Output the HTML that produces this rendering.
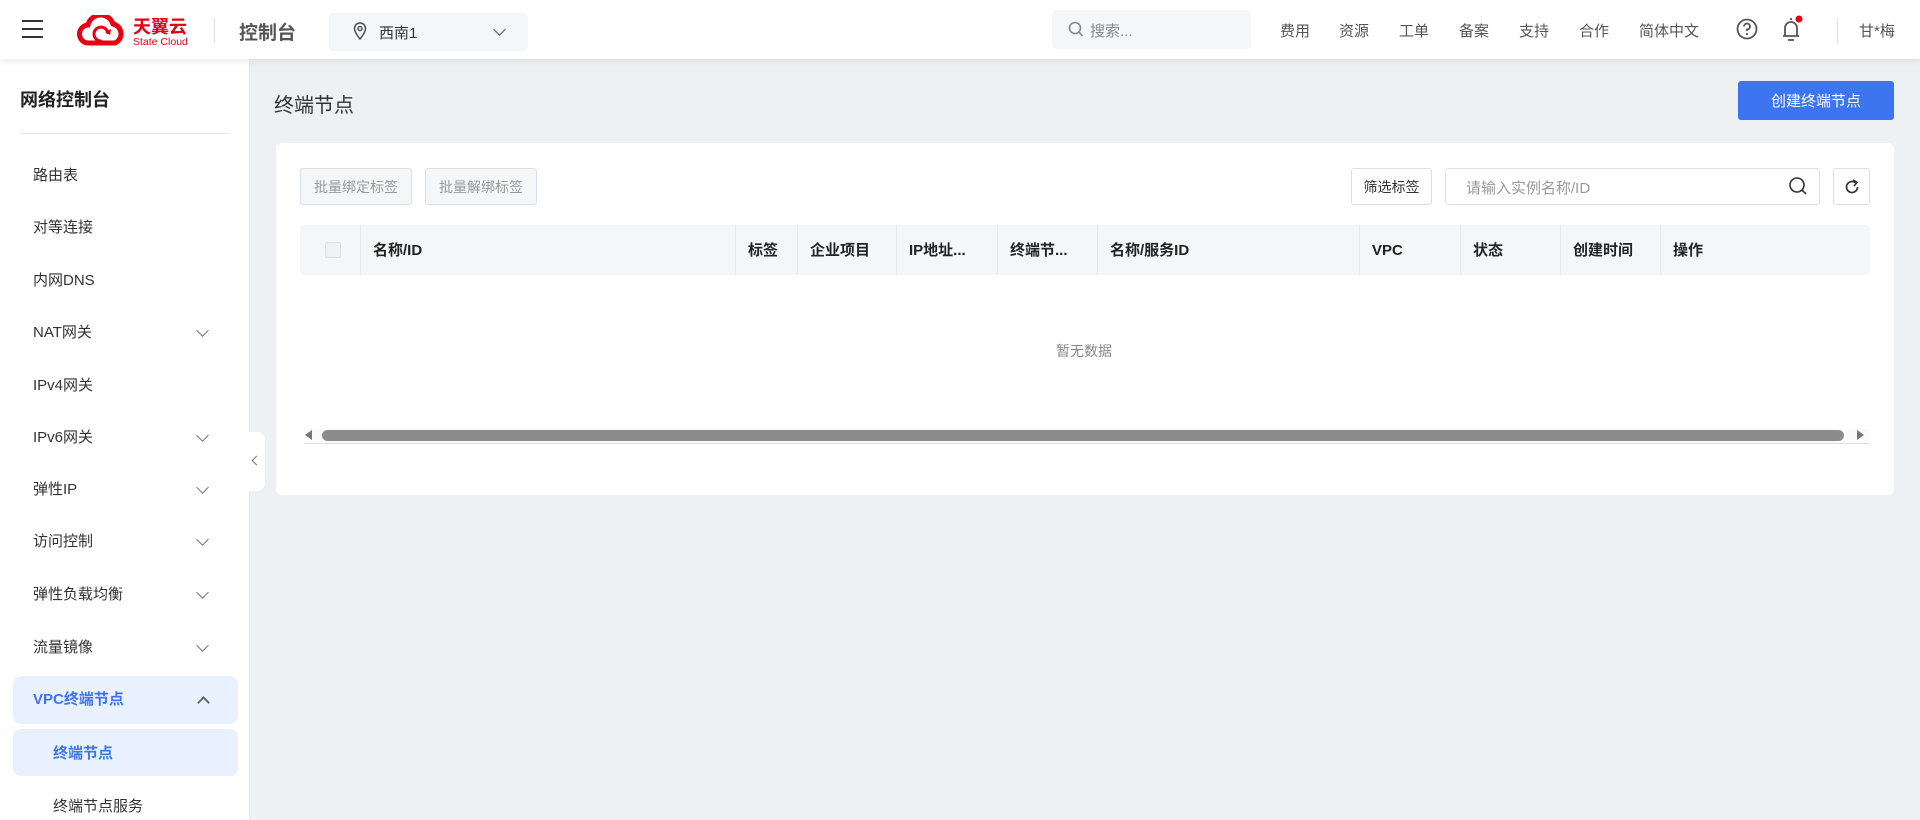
<!DOCTYPE html>
<html><head><meta charset="utf-8"><style>
*{box-sizing:border-box;margin:0;padding:0}
body{width:1920px;height:820px;overflow:hidden;background:#eef0f4;font-family:"Liberation Sans","Noto Sans CJK SC",sans-serif;color:#333;position:relative}
.a{position:absolute;white-space:nowrap}
.hdr{left:0;top:0;width:1920px;height:59px;background:#fff;box-shadow:0 2px 8px rgba(0,0,0,.08);z-index:5}
.nav{font-size:15px;color:#555;top:20px}
.side{left:0;top:59px;width:250px;height:761px;background:#fff;border-right:1px solid #e4e6eb}
.mi{left:33px;font-size:15px;color:#333;line-height:22px}
.chev{left:198px;width:9px;height:9px;border-right:1.5px solid #777;border-bottom:1.5px solid #777;transform:rotate(45deg)}
.btn{border:1px solid #dcdfe6;border-radius:3px;font-size:14px;display:flex;align-items:center;justify-content:center;background:#f5f6f8;color:#999}
.th{top:240px;font-size:15px;font-weight:bold;color:#222;line-height:22px}
.cd{top:225px;width:1px;height:49px;background:#e6e8ec}
</style></head><body>
<div class="a hdr">
  <div class="a" style="left:22px;top:20px;width:21px;height:2px;background:#333"></div>
  <div class="a" style="left:22px;top:28px;width:21px;height:2px;background:#333"></div>
  <div class="a" style="left:22px;top:36px;width:21px;height:2px;background:#333"></div>
  <svg class="a" style="left:77px;top:15px" width="50" height="32" viewBox="0 0 50 32"><path d="M12 28 A9 9 0 0 1 11 10 A13 13 0 0 1 36 9 A10 10 0 0 1 38 28 Z" fill="none" stroke="#e60012" stroke-width="5"/><path d="M25 26 A7 7 0 1 1 31 19" fill="none" stroke="#e60012" stroke-width="3"/><path d="M28 17 L33 20 L34 14Z" fill="#e60012"/></svg>
  <div class="a" style="left:133px;top:13px;font-size:18px;font-weight:bold;color:#e60012">天翼云</div>
  <div class="a" style="left:133px;top:36px;font-size:10.5px;color:#e60012">State Cloud</div>
  <div class="a" style="left:214px;top:18px;width:1px;height:25px;background:#e0e0e0"></div>
  <div class="a" style="left:239px;top:18px;font-size:19px;font-weight:bold;color:#555">控制台</div>
  <div class="a" style="left:329px;top:13px;width:199px;height:38px;background:#f5f6f8;border-radius:4px"></div>
  <svg class="a" style="left:353px;top:22px" width="14" height="18" viewBox="0 0 14 18"><path d="M7 17 C3 12 1.5 9 1.5 6.5 A5.5 5.5 0 0 1 12.5 6.5 C12.5 9 11 12 7 17Z" fill="none" stroke="#555" stroke-width="1.6"/><circle cx="7" cy="6.5" r="2" fill="none" stroke="#555" stroke-width="1.5"/></svg>
  <div class="a" style="left:379px;top:22px;font-size:15px;color:#333">西南1</div>
  <div class="a" style="left:495px;top:25px;width:9px;height:9px;border-right:1.6px solid #555;border-bottom:1.6px solid #555;transform:rotate(45deg)"></div>
  <div class="a" style="left:1052px;top:10px;width:199px;height:39px;background:#f5f6f8;border-radius:4px"></div>
  <svg class="a" style="left:1068px;top:21px" width="16" height="18" viewBox="0 0 16 18"><circle cx="7" cy="7" r="5.5" fill="none" stroke="#888" stroke-width="1.6"/><path d="M11 11 L14.5 15" stroke="#888" stroke-width="1.6"/></svg>
  <div class="a" style="left:1090px;top:20px;font-size:15px;color:#888">搜索...</div>
  <div class="a nav" style="left:1280px">费用</div>
  <div class="a nav" style="left:1339px">资源</div>
  <div class="a nav" style="left:1399px">工单</div>
  <div class="a nav" style="left:1459px">备案</div>
  <div class="a nav" style="left:1519px">支持</div>
  <div class="a nav" style="left:1579px">合作</div>
  <div class="a nav" style="left:1639px">简体中文</div>
  <svg class="a" style="left:1736px;top:18px" width="22" height="22" viewBox="0 0 22 22"><circle cx="11" cy="11" r="9.5" fill="none" stroke="#555" stroke-width="1.8"/><path d="M8 8.5 A3 3 0 1 1 11 11.5 V13" fill="none" stroke="#555" stroke-width="1.8"/><circle cx="11" cy="16" r="1.1" fill="#555"/></svg>
  <svg class="a" style="left:1780px;top:15px" width="24" height="28" viewBox="0 0 24 28"><path d="M11 3 V5 M5 21 V13 A6 6 0 0 1 17 13 V21 Z M3 21 H19 M8 25 H14" fill="none" stroke="#555" stroke-width="1.8"/><circle cx="19" cy="4" r="3.5" fill="#e60012"/></svg>
  <div class="a" style="left:1837px;top:18px;width:1px;height:25px;background:#e0e0e0"></div>
  <div class="a nav" style="left:1859px">甘*梅</div>
</div>
<div class="a side">
  <div class="a" style="left:20px;top:27px;font-size:18px;font-weight:bold;color:#222">网络控制台</div>
  <div class="a" style="left:20px;top:74px;width:210px;height:1px;background:#e4e6eb"></div>
</div>
<div class="a mi" style="top:165px">路由表</div>
<div class="a mi" style="top:217px">对等连接</div>
<div class="a mi" style="top:270px">内网DNS</div>
<div class="a mi" style="top:322px">NAT网关</div><div class="a chev" style="top:326px"></div>
<div class="a mi" style="top:375px">IPv4网关</div>
<div class="a mi" style="top:427px">IPv6网关</div><div class="a chev" style="top:431px"></div>
<div class="a mi" style="top:479px">弹性IP</div><div class="a chev" style="top:483px"></div>
<div class="a mi" style="top:531px">访问控制</div><div class="a chev" style="top:535px"></div>
<div class="a mi" style="top:584px">弹性负载均衡</div><div class="a chev" style="top:588px"></div>
<div class="a mi" style="top:637px">流量镜像</div><div class="a chev" style="top:641px"></div>
<div class="a" style="left:13px;top:676px;width:225px;height:48px;background:#e8f1fd;border-radius:8px"></div>
<div class="a mi" style="top:689px;color:#3d74f0;font-weight:bold">VPC终端节点</div>
<div class="a" style="left:199px;top:698px;width:9px;height:9px;border-left:2px solid #666;border-top:2px solid #666;transform:rotate(45deg)"></div>
<div class="a" style="left:13px;top:729px;width:225px;height:47px;background:#e8f1fd;border-radius:8px"></div>
<div class="a" style="left:53px;top:742px;font-size:15px;color:#3d74f0;font-weight:bold">终端节点</div>
<div class="a" style="left:53px;top:795px;font-size:15px;color:#333">终端节点服务</div>
<div class="a" style="left:249px;top:432px;width:16px;height:59px;background:#fff;border-radius:0 8px 8px 0"></div>
<div class="a" style="left:253px;top:457px;width:7px;height:7px;border-left:1.5px solid #777;border-bottom:1.5px solid #777;transform:rotate(45deg)"></div>

<div class="a" style="left:274px;top:89px;font-size:20px;color:#333">终端节点</div>
<div class="a" style="left:1738px;top:81px;width:156px;height:39px;background:#3d74f0;border-radius:3px;color:#fff;font-size:15px;display:flex;align-items:center;justify-content:center">创建终端节点</div>
<div class="a" style="left:276px;top:143px;width:1618px;height:352px;background:#fff;border-radius:6px"></div>
<div class="a btn" style="left:300px;top:168px;width:112px;height:37px">批量绑定标签</div>
<div class="a btn" style="left:425px;top:168px;width:112px;height:37px">批量解绑标签</div>
<div class="a btn" style="left:1351px;top:168px;width:81px;height:37px;background:#fff;color:#333">筛选标签</div>
<div class="a" style="left:1445px;top:168px;width:375px;height:37px;border:1px solid #dcdfe6;border-radius:3px"></div>
<div class="a" style="left:1466px;top:177px;font-size:15px;color:#999">请输入实例名称/ID</div>
<svg class="a" style="left:1788px;top:176px" width="20" height="22" viewBox="0 0 20 22"><circle cx="9" cy="9" r="7" fill="none" stroke="#333" stroke-width="1.6"/><path d="M14 14 L18 18" stroke="#333" stroke-width="1.6"/></svg>
<div class="a" style="left:1833px;top:168px;width:37px;height:37px;border:1px solid #dcdfe6;border-radius:3px"></div>
<svg class="a" style="left:1843px;top:178px" width="18" height="18" viewBox="0 0 18 18"><path d="M14.5 9 A5.5 5.5 0 1 1 12.5 4.8" fill="none" stroke="#333" stroke-width="1.7"/><path d="M10 2 L14 4.5 L11 8" fill="none" stroke="#333" stroke-width="1.7"/></svg>
<div class="a" style="left:300px;top:225px;width:1570px;height:50px;background:#f5f6f8;border-radius:4px"></div>
<div class="a" style="left:325px;top:242px;width:16px;height:16px;border:1px solid #dcdfe6;border-radius:2px;background:#f0f1f3"></div>
<div class="a cd" style="left:360px"></div><div class="a cd" style="left:735px"></div><div class="a cd" style="left:797px"></div><div class="a cd" style="left:896px"></div><div class="a cd" style="left:997px"></div><div class="a cd" style="left:1097px"></div><div class="a cd" style="left:1359px"></div><div class="a cd" style="left:1460px"></div><div class="a cd" style="left:1560px"></div><div class="a cd" style="left:1660px"></div>
<div class="a th" style="left:373px">名称/ID</div>
<div class="a th" style="left:748px">标签</div>
<div class="a th" style="left:810px">企业项目</div>
<div class="a th" style="left:909px">IP地址...</div>
<div class="a th" style="left:1010px">终端节...</div>
<div class="a th" style="left:1110px">名称/服务ID</div>
<div class="a th" style="left:1372px">VPC</div>
<div class="a th" style="left:1473px">状态</div>
<div class="a th" style="left:1573px">创建时间</div>
<div class="a th" style="left:1673px">操作</div>
<div class="a" style="left:1056px;top:341px;font-size:14px;color:#888">暂无数据</div>
<div class="a" style="left:304px;top:429px;width:1566px;height:13px;background:#fafafa"></div>
<div class="a" style="left:305px;top:430px;width:0;height:0;border-top:5px solid transparent;border-bottom:5px solid transparent;border-right:7px solid #777"></div>
<div class="a" style="left:1857px;top:430px;width:0;height:0;border-top:5px solid transparent;border-bottom:5px solid transparent;border-left:7px solid #777"></div>
<div class="a" style="left:322px;top:430px;width:1522px;height:11px;background:#8c8c8c;border-radius:6px"></div>
<div class="a" style="left:304px;top:443px;width:1566px;height:1px;background:#dcdfe6"></div>
</body></html>
